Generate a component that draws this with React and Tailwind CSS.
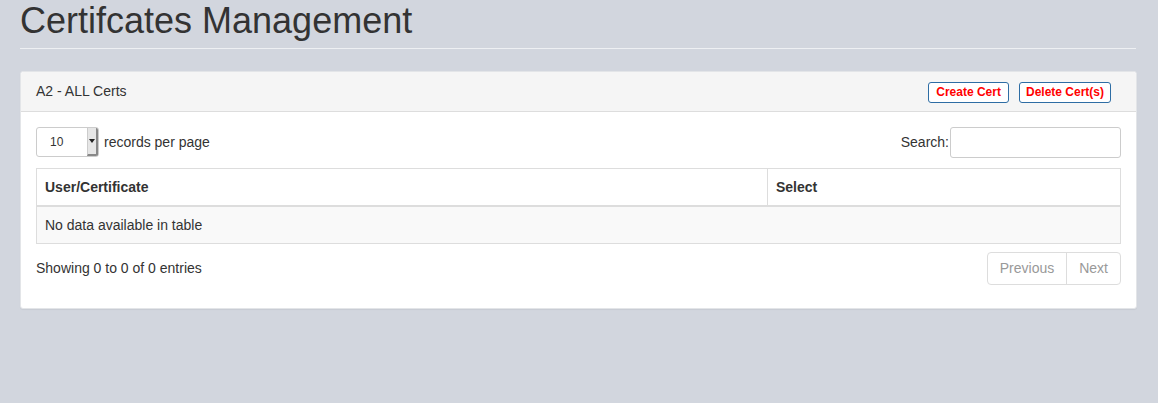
export default function App() {
  return (
    <div className="min-h-[403px] bg-[#d2d6de] px-5 text-[14px] text-[#333]" style={{ fontFamily: '"Liberation Sans", Arial, sans-serif' }}>
      <h1 className="m-0 pt-[1px] text-[36px] leading-[40px] font-normal text-[#333]">Certifcates Management</h1>
      <div className="mt-[7px] mr-[2px] border-t border-[#eef0f3]" />
      <div className="mt-[22px] mr-[1px] rounded-[3px] border border-[#e3e5e8] bg-white shadow-[0_1px_1px_rgba(0,0,0,0.05)]">
        <div className="flex h-[40px] items-center justify-between rounded-t-[3px] border-b border-[#ddd] bg-[#f5f5f5] pl-[15px] pr-[25px]">
          <span className="text-[14px]">A2 - ALL Certs</span>
          <div className="flex items-center gap-[10px] pt-[1px]">
            <button className="h-[21px] rounded-[3px] border border-[#2e6da4] bg-white px-[7px] text-[12px] font-bold leading-[19px] text-[#ff0000]">Create Cert</button>
            <button className="h-[21px] rounded-[3px] border border-[#2e6da4] bg-white px-[6px] text-[12px] font-bold leading-[19px] text-[#ff0000]">Delete Cert(s)</button>
          </div>
        </div>
        <div className="px-[15px] pt-[15px] pb-[23px]">
          <div className="flex h-[30px] items-start justify-between">
            <div className="flex h-[30px] items-center">
              <div className="flex h-[30px] w-[63px] items-center rounded-[3px] border border-[#ccc] bg-white">
                <span className="flex-1 pl-[13px] text-[12px] text-[#333]">10</span>
                <div className="flex h-[28px] w-[11px] items-center justify-center rounded-r-[2px] border-r-2 border-b-2 border-[#888] border-l border-l-[#ccc] bg-[#e6e6e6]">
                  <svg width="6" height="4" viewBox="0 0 6 4"><path d="M0 0h6L3 4z" fill="#222" /></svg>
                </div>
              </div>
              <span className="ml-[5px]">records per page</span>
            </div>
            <div className="flex h-[30px] items-center">
              <span>Search:</span>
              <div className="ml-[1px] h-[31px] w-[171px] rounded-[3px] border border-[#ccc] bg-white" />
            </div>
          </div>
          <div className="mt-[11px] border border-[#ddd]">
            <div className="flex h-[38px] border-b-2 border-[#ddd] font-bold">
              <div className="flex w-[731px] items-center border-r border-[#ddd] pl-[8px]">User/Certificate</div>
              <div className="flex flex-1 items-center pl-[8px]">Select</div>
            </div>
            <div className="flex h-[36px] items-center bg-[#f9f9f9] pl-[8px]">No data available in table</div>
          </div>
          <div className="mt-[8px] flex items-start justify-between">
            <span className="pt-[6px]">Showing 0 to 0 of 0 entries</span>
            <div className="flex h-[33px] rounded-[4px] border border-[#ddd] text-[#999]">
              <span className="flex items-center border-r border-[#ddd] px-[12px]">Previous</span>
              <span className="flex items-center px-[12px]">Next</span>
            </div>
          </div>
        </div>
      </div>
    </div>
  );
}
